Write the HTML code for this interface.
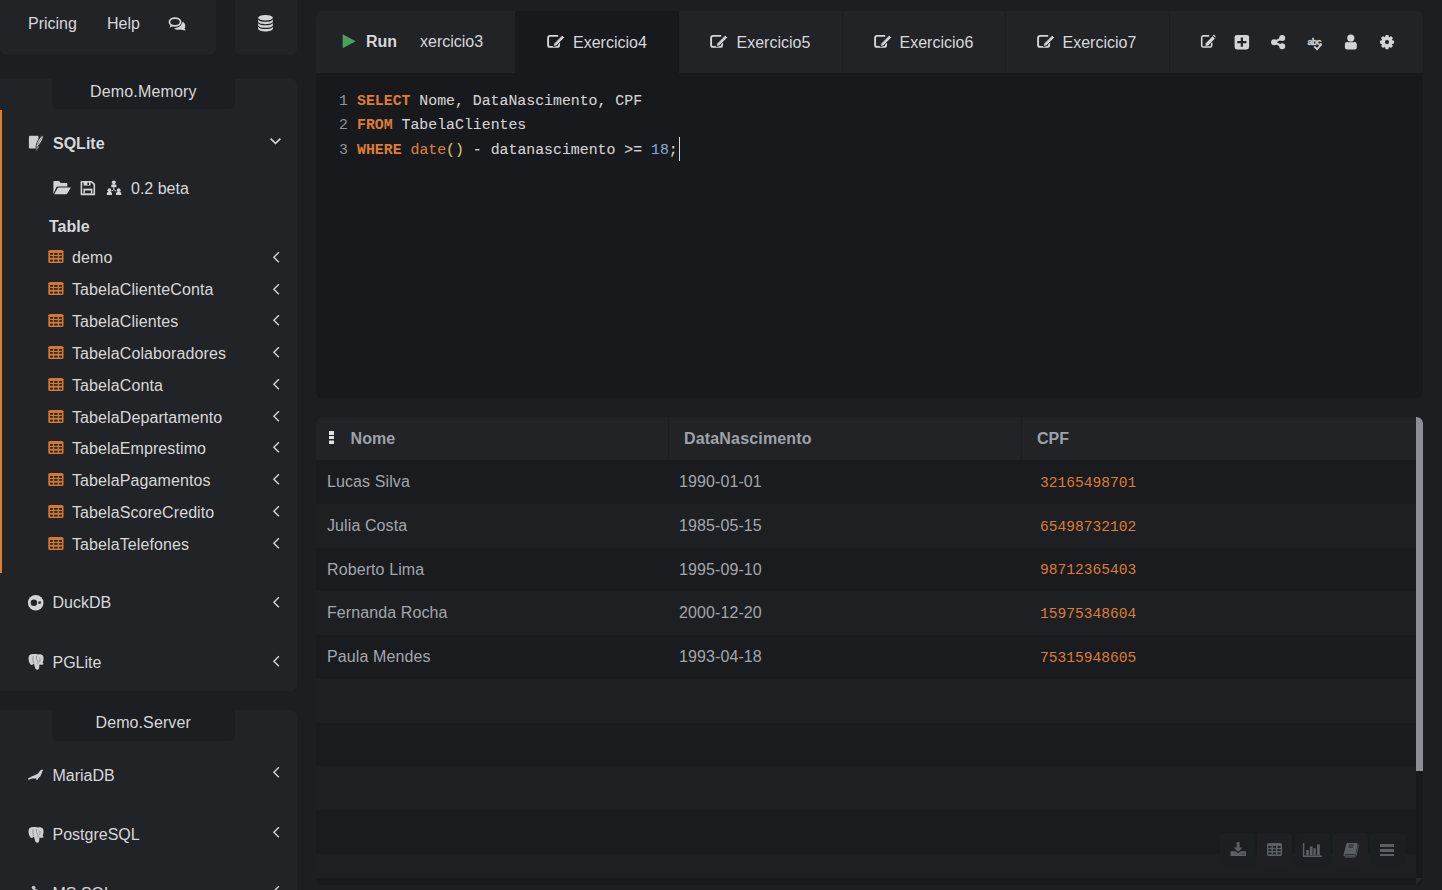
<!DOCTYPE html>
<html><head><meta charset="utf-8">
<style>
*{box-sizing:border-box;margin:0;padding:0}
html,body{width:1442px;height:890px;overflow:hidden;background:#1d1e22;font-family:"Liberation Sans",sans-serif;font-size:16px;color:#d6d8da}
.abs{position:absolute}
.panel{background:#222327}
.t{position:absolute;white-space:nowrap;line-height:16px;height:16px}
.b{font-weight:bold}
svg{position:absolute;display:block;overflow:visible}
.row{position:absolute;left:0;width:1100px;height:44px}
.code{position:absolute;font-family:"Liberation Mono",monospace;font-size:14.85px;line-height:24.45px;white-space:pre;color:#d4d4d4;-webkit-text-stroke:0.1px currentColor}
.kw{color:#dd7d35;font-weight:bold;-webkit-text-stroke:0}
.fn{color:#d6823f}
.pr{color:#dcc46a}
.nm{color:#7ea7d8}
.ln{position:absolute;font-family:"Liberation Mono",monospace;font-size:14.85px;line-height:24.45px;color:#8f949b;text-align:right;width:20px}
.cell{position:absolute;line-height:16px;white-space:nowrap;color:#a3a6ab;letter-spacing:0.1px}
.cpf{position:absolute;font-family:"Liberation Mono",monospace;font-size:14.6px;line-height:16px;color:#dc7c36;white-space:nowrap;margin-top:0.9px}
.chev{position:absolute;left:272px;width:8px;height:11px}
</style></head><body>
<!-- top left boxes -->
<div class="abs panel" style="left:0;top:0;width:216px;height:55px;border-radius:0 0 6px 6px"></div>
<div class="abs panel" style="left:235px;top:0;width:62px;height:55px;border-radius:0 0 6px 6px"></div>
<div class="t" style="left:28px;top:16px">Pricing</div>
<div class="t" style="left:107px;top:16px">Help</div>
<!-- ICON: comments -->

<!-- ICON: database -->


<!-- sidebar panel 1 -->
<div class="abs panel" style="left:0;top:79px;width:297px;height:612px;border-radius:0 6px 6px 0"></div>
<div class="abs" style="left:52px;top:79px;width:183px;height:30px;background:#1d1e22;border-radius:0 0 6px 6px"></div>
<div class="t" style="left:90px;top:83.5px;letter-spacing:0.16px">Demo.Memory</div>
<div class="abs" style="left:0;top:110px;width:2px;height:463px;background:#da8030"></div>

<div class="t b" style="left:53px;top:136.3px">SQLite</div>



<div class="t" style="left:131px;top:180.5px">0.2 beta</div>
<div class="t b" style="left:49px;top:219.2px">Table</div>


<div class="t" style="left:52.5px;top:595.2px">DuckDB</div>

<div class="t" style="left:52.5px;top:655.2px">PGLite</div>


<!-- sidebar panel 2 -->
<div class="abs panel" style="left:0;top:710px;width:297px;height:180px;border-radius:0 6px 0 0"></div>
<div class="abs" style="left:52px;top:710px;width:183px;height:31px;background:#1d1e22;border-radius:0 0 6px 6px"></div>
<div class="t" style="left:95.5px;top:714.5px;letter-spacing:0.1px">Demo.Server</div>
<div class="t" style="left:52.5px;top:768.3px">MariaDB</div>

<div class="t" style="left:52.5px;top:826.5px">PostgreSQL</div>

<div class="t" style="left:52.5px;top:885.5px">MS SQL</div>


<svg style="left:164px;top:12px;width:26px;height:22px" viewBox="0 0 26 22"><path d="M18.3 9.8 C21.5 10.8 21.9 14.5 20.6 16.6 L21.6 18.4 C19.2 18.2 17.6 17.9 16.4 17.4 C14.2 17.9 11.5 17.7 9.8 16.4 C13.5 16.2 17.8 14.2 18.3 9.8 Z" fill="#d2d5d7"/>
<ellipse cx="11" cy="10" rx="5.6" ry="3.9" fill="none" stroke="#d2d5d7" stroke-width="1.7"/>
<path d="M6.8 12.6 L5.6 15.6 L9.6 13.9 Z" fill="#d2d5d7"/></svg>
<svg style="left:256px;top:13px;width:20px;height:21px" viewBox="0 0 20 21"><ellipse cx="9.5" cy="4.8" rx="7.4" ry="2.8" fill="#d2d5d7"/>
<path d="M2.1 6.2 C2.1 9.6 16.9 9.6 16.9 6.2 L16.9 8.6 C16.9 12 2.1 12 2.1 8.6 Z" fill="#d2d5d7"/>
<path d="M2.1 9.8 C2.1 13.2 16.9 13.2 16.9 9.8 L16.9 12.2 C16.9 15.6 2.1 15.6 2.1 12.2 Z" fill="#d2d5d7"/>
<path d="M2.1 13.4 C2.1 16.8 16.9 16.8 16.9 13.4 L16.9 15.6 C16.9 19.6 2.1 19.6 2.1 15.6 Z" fill="#d2d5d7"/></svg>
<svg style="left:24px;top:130px;width:24px;height:24px" viewBox="0 0 24 24"><rect x="4.9" y="5.8" width="9.6" height="12.8" rx="1.1" fill="#ccd0d1"/>
<path d="M12.2 18.6 C11.6 15 13.4 10.2 17.6 5.8 C19.6 5.4 19.6 7.2 18.6 9.4 C17 12.8 14.6 15.6 12.2 18.6 Z" fill="#ccd0d1" stroke="#222327" stroke-width="0.9"/>
<path d="M13.4 15.4 C14.6 12.6 16 10.2 18 7.4" fill="none" stroke="#6e7274" stroke-width="0.7"/>
<path d="M12.6 18 L12.9 20.8" stroke="#8a8e90" stroke-width="0.8"/></svg>
<svg style="left:268px;top:136px;width:15px;height:10px" viewBox="0 0 15 10"><path d="M2.6 2.6 L7.5 7.4 L12.4 2.6" fill="none" stroke="#d2d5d7" stroke-width="1.6" stroke-linecap="butt"/></svg>
<svg style="left:50px;top:176px;width:24px;height:24px" viewBox="0 0 24 24"><path d="M3.4 18 L3.4 5.8 C3.4 5.2 3.8 4.9 4.3 4.9 L9.2 4.9 L10.6 7 L16.6 7 C17 7 17.3 7.3 17.3 7.7 L17.3 10.6 L8 10.6 C7.2 10.6 6.6 11 6.2 11.6 Z" fill="#d2d5d7"/>
<path d="M4.2 18.2 L7.4 12.4 C7.7 11.9 8.1 11.6 8.8 11.6 L20.9 11.6 L17.3 17.6 C17 18 16.6 18.2 16.1 18.2 Z" fill="#d2d5d7"/></svg>
<svg style="left:50px;top:176px;width:50px;height:24px" viewBox="0 0 50 24"><path d="M31.4 5.7 L41.6 5.7 L44.3 8.4 L44.3 18.4 L31.4 18.4 Z" fill="none" stroke="#d2d5d7" stroke-width="1.6" stroke-linejoin="round"/>
<path d="M33.6 6 L40.6 6 L40.6 9.6 L33.6 9.6 Z" fill="#d2d5d7"/>
<rect x="37.4" y="6.6" width="1.6" height="2.4" fill="#222327"/>
<path d="M33.4 12.6 L42.4 12.6 L42.4 17.6 L33.4 17.6 Z" fill="#d2d5d7"/>
<rect x="34.9" y="14.5" width="6" height="2.6" fill="#222327"/></svg>
<svg style="left:100px;top:176px;width:26px;height:24px" viewBox="0 0 26 24"><circle cx="13.8" cy="6.3" r="1.9" fill="#d2d5d7"/><path d="M11.200000000000001 11.2 L11.200000000000001 9.7 C11.200000000000001 8.5 12.200000000000001 8.2 13.8 8.2 C15.4 8.2 16.400000000000002 8.5 16.400000000000002 9.7 L16.400000000000002 11.2 Z" fill="#d2d5d7"/><circle cx="9.4" cy="14.2" r="1.9" fill="#d2d5d7"/><path d="M6.800000000000001 19.1 L6.800000000000001 17.599999999999998 C6.800000000000001 16.4 7.800000000000001 16.099999999999998 9.4 16.099999999999998 C11.0 16.099999999999998 12.0 16.4 12.0 17.599999999999998 L12.0 19.1 Z" fill="#d2d5d7"/><circle cx="18.7" cy="14.2" r="1.9" fill="#d2d5d7"/><path d="M16.099999999999998 19.1 L16.099999999999998 17.599999999999998 C16.099999999999998 16.4 17.099999999999998 16.099999999999998 18.7 16.099999999999998 C20.3 16.099999999999998 21.3 16.4 21.3 17.599999999999998 L21.3 19.1 Z" fill="#d2d5d7"/><path d="M13.8 11 L13.8 13.6 L11.6 15.2 M13.8 13.6 L16.2 15.2" stroke="#d2d5d7" stroke-width="0.9" fill="none"/></svg>
<div class="t" style="left:72px;top:250.00px;letter-spacing:0.1px">demo</div>
<svg style="left:48px;top:250.3px;width:16px;height:13px" viewBox="0 0 16 13"><rect x="0.3" y="0" width="15.2" height="13" rx="1.6" fill="#d4772f"/><g fill="#222327"><rect x="2.0" y="3.0" width="2.9" height="1.8"/><rect x="6.1" y="3.0" width="3.6" height="1.8"/><rect x="11.1" y="3.0" width="2.9" height="1.8"/><rect x="2.0" y="6.1" width="2.9" height="1.7"/><rect x="6.1" y="6.1" width="3.6" height="1.7"/><rect x="11.1" y="6.1" width="2.9" height="1.7"/><rect x="2.0" y="9.7" width="2.9" height="1.8"/><rect x="6.1" y="9.7" width="3.6" height="1.8"/><rect x="11.1" y="9.7" width="2.9" height="1.8"/></g></svg>
<div class="t" style="left:72px;top:282.05px;letter-spacing:0.1px">TabelaClienteConta</div>
<svg style="left:48px;top:282px;width:16px;height:13px" viewBox="0 0 16 13"><rect x="0.3" y="0" width="15.2" height="13" rx="1.6" fill="#d4772f"/><g fill="#222327"><rect x="2.0" y="3.0" width="2.9" height="1.8"/><rect x="6.1" y="3.0" width="3.6" height="1.8"/><rect x="11.1" y="3.0" width="2.9" height="1.8"/><rect x="2.0" y="6.1" width="2.9" height="1.7"/><rect x="6.1" y="6.1" width="3.6" height="1.7"/><rect x="11.1" y="6.1" width="2.9" height="1.7"/><rect x="2.0" y="9.7" width="2.9" height="1.8"/><rect x="6.1" y="9.7" width="3.6" height="1.8"/><rect x="11.1" y="9.7" width="2.9" height="1.8"/></g></svg>
<div class="t" style="left:72px;top:314.05px;letter-spacing:0.1px">TabelaClientes</div>
<svg style="left:48px;top:314px;width:16px;height:13px" viewBox="0 0 16 13"><rect x="0.3" y="0" width="15.2" height="13" rx="1.6" fill="#d4772f"/><g fill="#222327"><rect x="2.0" y="3.0" width="2.9" height="1.8"/><rect x="6.1" y="3.0" width="3.6" height="1.8"/><rect x="11.1" y="3.0" width="2.9" height="1.8"/><rect x="2.0" y="6.1" width="2.9" height="1.7"/><rect x="6.1" y="6.1" width="3.6" height="1.7"/><rect x="11.1" y="6.1" width="2.9" height="1.7"/><rect x="2.0" y="9.7" width="2.9" height="1.8"/><rect x="6.1" y="9.7" width="3.6" height="1.8"/><rect x="11.1" y="9.7" width="2.9" height="1.8"/></g></svg>
<div class="t" style="left:72px;top:346.05px;letter-spacing:0.1px">TabelaColaboradores</div>
<svg style="left:48px;top:346px;width:16px;height:13px" viewBox="0 0 16 13"><rect x="0.3" y="0" width="15.2" height="13" rx="1.6" fill="#d4772f"/><g fill="#222327"><rect x="2.0" y="3.0" width="2.9" height="1.8"/><rect x="6.1" y="3.0" width="3.6" height="1.8"/><rect x="11.1" y="3.0" width="2.9" height="1.8"/><rect x="2.0" y="6.1" width="2.9" height="1.7"/><rect x="6.1" y="6.1" width="3.6" height="1.7"/><rect x="11.1" y="6.1" width="2.9" height="1.7"/><rect x="2.0" y="9.7" width="2.9" height="1.8"/><rect x="6.1" y="9.7" width="3.6" height="1.8"/><rect x="11.1" y="9.7" width="2.9" height="1.8"/></g></svg>
<div class="t" style="left:72px;top:378.05px;letter-spacing:0.1px">TabelaConta</div>
<svg style="left:48px;top:378px;width:16px;height:13px" viewBox="0 0 16 13"><rect x="0.3" y="0" width="15.2" height="13" rx="1.6" fill="#d4772f"/><g fill="#222327"><rect x="2.0" y="3.0" width="2.9" height="1.8"/><rect x="6.1" y="3.0" width="3.6" height="1.8"/><rect x="11.1" y="3.0" width="2.9" height="1.8"/><rect x="2.0" y="6.1" width="2.9" height="1.7"/><rect x="6.1" y="6.1" width="3.6" height="1.7"/><rect x="11.1" y="6.1" width="2.9" height="1.7"/><rect x="2.0" y="9.7" width="2.9" height="1.8"/><rect x="6.1" y="9.7" width="3.6" height="1.8"/><rect x="11.1" y="9.7" width="2.9" height="1.8"/></g></svg>
<div class="t" style="left:72px;top:410.05px;letter-spacing:0.1px">TabelaDepartamento</div>
<svg style="left:48px;top:410px;width:16px;height:13px" viewBox="0 0 16 13"><rect x="0.3" y="0" width="15.2" height="13" rx="1.6" fill="#d4772f"/><g fill="#222327"><rect x="2.0" y="3.0" width="2.9" height="1.8"/><rect x="6.1" y="3.0" width="3.6" height="1.8"/><rect x="11.1" y="3.0" width="2.9" height="1.8"/><rect x="2.0" y="6.1" width="2.9" height="1.7"/><rect x="6.1" y="6.1" width="3.6" height="1.7"/><rect x="11.1" y="6.1" width="2.9" height="1.7"/><rect x="2.0" y="9.7" width="2.9" height="1.8"/><rect x="6.1" y="9.7" width="3.6" height="1.8"/><rect x="11.1" y="9.7" width="2.9" height="1.8"/></g></svg>
<div class="t" style="left:72px;top:441.05px;letter-spacing:0.1px">TabelaEmprestimo</div>
<svg style="left:48px;top:441px;width:16px;height:13px" viewBox="0 0 16 13"><rect x="0.3" y="0" width="15.2" height="13" rx="1.6" fill="#d4772f"/><g fill="#222327"><rect x="2.0" y="3.0" width="2.9" height="1.8"/><rect x="6.1" y="3.0" width="3.6" height="1.8"/><rect x="11.1" y="3.0" width="2.9" height="1.8"/><rect x="2.0" y="6.1" width="2.9" height="1.7"/><rect x="6.1" y="6.1" width="3.6" height="1.7"/><rect x="11.1" y="6.1" width="2.9" height="1.7"/><rect x="2.0" y="9.7" width="2.9" height="1.8"/><rect x="6.1" y="9.7" width="3.6" height="1.8"/><rect x="11.1" y="9.7" width="2.9" height="1.8"/></g></svg>
<div class="t" style="left:72px;top:473.05px;letter-spacing:0.1px">TabelaPagamentos</div>
<svg style="left:48px;top:473px;width:16px;height:13px" viewBox="0 0 16 13"><rect x="0.3" y="0" width="15.2" height="13" rx="1.6" fill="#d4772f"/><g fill="#222327"><rect x="2.0" y="3.0" width="2.9" height="1.8"/><rect x="6.1" y="3.0" width="3.6" height="1.8"/><rect x="11.1" y="3.0" width="2.9" height="1.8"/><rect x="2.0" y="6.1" width="2.9" height="1.7"/><rect x="6.1" y="6.1" width="3.6" height="1.7"/><rect x="11.1" y="6.1" width="2.9" height="1.7"/><rect x="2.0" y="9.7" width="2.9" height="1.8"/><rect x="6.1" y="9.7" width="3.6" height="1.8"/><rect x="11.1" y="9.7" width="2.9" height="1.8"/></g></svg>
<div class="t" style="left:72px;top:505.05px;letter-spacing:0.1px">TabelaScoreCredito</div>
<svg style="left:48px;top:505px;width:16px;height:13px" viewBox="0 0 16 13"><rect x="0.3" y="0" width="15.2" height="13" rx="1.6" fill="#d4772f"/><g fill="#222327"><rect x="2.0" y="3.0" width="2.9" height="1.8"/><rect x="6.1" y="3.0" width="3.6" height="1.8"/><rect x="11.1" y="3.0" width="2.9" height="1.8"/><rect x="2.0" y="6.1" width="2.9" height="1.7"/><rect x="6.1" y="6.1" width="3.6" height="1.7"/><rect x="11.1" y="6.1" width="2.9" height="1.7"/><rect x="2.0" y="9.7" width="2.9" height="1.8"/><rect x="6.1" y="9.7" width="3.6" height="1.8"/><rect x="11.1" y="9.7" width="2.9" height="1.8"/></g></svg>
<div class="t" style="left:72px;top:537.05px;letter-spacing:0.1px">TabelaTelefones</div>
<svg style="left:48px;top:537px;width:16px;height:13px" viewBox="0 0 16 13"><rect x="0.3" y="0" width="15.2" height="13" rx="1.6" fill="#d4772f"/><g fill="#222327"><rect x="2.0" y="3.0" width="2.9" height="1.8"/><rect x="6.1" y="3.0" width="3.6" height="1.8"/><rect x="11.1" y="3.0" width="2.9" height="1.8"/><rect x="2.0" y="6.1" width="2.9" height="1.7"/><rect x="6.1" y="6.1" width="3.6" height="1.7"/><rect x="11.1" y="6.1" width="2.9" height="1.7"/><rect x="2.0" y="9.7" width="2.9" height="1.8"/><rect x="6.1" y="9.7" width="3.6" height="1.8"/><rect x="11.1" y="9.7" width="2.9" height="1.8"/></g></svg>
<svg style="left:24px;top:590px;width:24px;height:24px" viewBox="0 0 24 24"><circle cx="11.7" cy="12.8" r="7.8" fill="#d2d5d7"/><circle cx="9.9" cy="12.7" r="3.2" fill="#222327"/><path d="M14.3 11.6 L17.2 11.6 L16.6 13.8 L14.3 13.8 Z" fill="#222327"/></svg>
<svg style="left:26.5px;top:652.5px;width:18px;height:18px" viewBox="0 0 18 18"><path d="M4.4 1.3 C2 1.6 1.2 4 1.6 6.8 C1.9 9 2.8 11.6 4.4 11.9 C5.6 12.1 6.4 11 6.9 10.4 C7.4 12 8 14.8 8.6 15.9 C9.2 17 11.2 17 11.8 15.9 C12.3 14.9 12.4 12.6 12.4 11.4 C13.6 11.8 15.2 11.9 16.4 11.2 C16.9 10.8 16.4 10.2 15.6 10 C16.4 8 17 5 16.2 3.2 C15.2 1.2 12.6 0.9 10.8 1.5 C9.2 0.9 6.6 0.9 4.4 1.3 Z" fill="#ccd0d1"/>
<path d="M6.2 3.2 C5.6 5 5.8 8 6.6 10 M9.6 2.8 C9.2 4.4 9.4 6.2 10.4 7.6 C11 8.6 11 10 10.6 11.4 M12.6 4.6 C13.2 5.6 13.2 7.6 12.6 9" fill="none" stroke="#6a6e71" stroke-width="0.6"/></svg>
<svg style="left:26.5px;top:825.5px;width:18px;height:18px" viewBox="0 0 18 18"><path d="M4.4 1.3 C2 1.6 1.2 4 1.6 6.8 C1.9 9 2.8 11.6 4.4 11.9 C5.6 12.1 6.4 11 6.9 10.4 C7.4 12 8 14.8 8.6 15.9 C9.2 17 11.2 17 11.8 15.9 C12.3 14.9 12.4 12.6 12.4 11.4 C13.6 11.8 15.2 11.9 16.4 11.2 C16.9 10.8 16.4 10.2 15.6 10 C16.4 8 17 5 16.2 3.2 C15.2 1.2 12.6 0.9 10.8 1.5 C9.2 0.9 6.6 0.9 4.4 1.3 Z" fill="#ccd0d1"/>
<path d="M6.2 3.2 C5.6 5 5.8 8 6.6 10 M9.6 2.8 C9.2 4.4 9.4 6.2 10.4 7.6 C11 8.6 11 10 10.6 11.4 M12.6 4.6 C13.2 5.6 13.2 7.6 12.6 9" fill="none" stroke="#6a6e71" stroke-width="0.6"/></svg>
<svg style="left:24px;top:764px;width:24px;height:20px" viewBox="0 0 24 20"><path d="M4 14.6 C5.4 13.8 6.2 13.2 7.6 12.5 C10 11.4 12.6 10.8 14 9.6 C15 8.4 15.6 6.8 16.8 6.2 C17.6 5.8 18.4 5.8 19.1 6 C18.6 7 17.9 8.6 17.2 10.6 C16.6 12.2 15.4 13.6 14.2 14.4 L13.2 15.9 L12 15.4 L12.4 14.6 C11 14.6 9.6 14.4 8.4 14.4 C7 14.6 6 15.4 5 15.8 C4.4 16 3.8 15.2 4 14.6 Z" fill="#ccd0d1"/></svg>
<svg style="left:24px;top:880px;width:24px;height:12px" viewBox="0 0 24 12"><circle cx="9.6" cy="7.6" r="1.9" fill="#bfc3c5"/><path d="M9 8.4 C11 8.6 13 9.6 15.4 10.2 L18 12 L10 12 Z" fill="#bfc3c5"/></svg>
<svg style="left:270px;top:250.80px;width:12px;height:12px" viewBox="0 0 12 12"><path d="M8.9 1.2 L3.9 6.2 L8.9 11.2" fill="none" stroke="#d2d5d7" stroke-width="1.4"/></svg>
<svg style="left:270px;top:282.56px;width:12px;height:12px" viewBox="0 0 12 12"><path d="M8.9 1.2 L3.9 6.2 L8.9 11.2" fill="none" stroke="#d2d5d7" stroke-width="1.4"/></svg>
<svg style="left:270px;top:314.32px;width:12px;height:12px" viewBox="0 0 12 12"><path d="M8.9 1.2 L3.9 6.2 L8.9 11.2" fill="none" stroke="#d2d5d7" stroke-width="1.4"/></svg>
<svg style="left:270px;top:346.08px;width:12px;height:12px" viewBox="0 0 12 12"><path d="M8.9 1.2 L3.9 6.2 L8.9 11.2" fill="none" stroke="#d2d5d7" stroke-width="1.4"/></svg>
<svg style="left:270px;top:377.84px;width:12px;height:12px" viewBox="0 0 12 12"><path d="M8.9 1.2 L3.9 6.2 L8.9 11.2" fill="none" stroke="#d2d5d7" stroke-width="1.4"/></svg>
<svg style="left:270px;top:409.60px;width:12px;height:12px" viewBox="0 0 12 12"><path d="M8.9 1.2 L3.9 6.2 L8.9 11.2" fill="none" stroke="#d2d5d7" stroke-width="1.4"/></svg>
<svg style="left:270px;top:441.36px;width:12px;height:12px" viewBox="0 0 12 12"><path d="M8.9 1.2 L3.9 6.2 L8.9 11.2" fill="none" stroke="#d2d5d7" stroke-width="1.4"/></svg>
<svg style="left:270px;top:473.12px;width:12px;height:12px" viewBox="0 0 12 12"><path d="M8.9 1.2 L3.9 6.2 L8.9 11.2" fill="none" stroke="#d2d5d7" stroke-width="1.4"/></svg>
<svg style="left:270px;top:504.88px;width:12px;height:12px" viewBox="0 0 12 12"><path d="M8.9 1.2 L3.9 6.2 L8.9 11.2" fill="none" stroke="#d2d5d7" stroke-width="1.4"/></svg>
<svg style="left:270px;top:536.64px;width:12px;height:12px" viewBox="0 0 12 12"><path d="M8.9 1.2 L3.9 6.2 L8.9 11.2" fill="none" stroke="#d2d5d7" stroke-width="1.4"/></svg>
<svg style="left:270px;top:595.50px;width:12px;height:12px" viewBox="0 0 12 12"><path d="M8.9 1.2 L3.9 6.2 L8.9 11.2" fill="none" stroke="#d2d5d7" stroke-width="1.4"/></svg>
<svg style="left:270px;top:654.50px;width:12px;height:12px" viewBox="0 0 12 12"><path d="M8.9 1.2 L3.9 6.2 L8.9 11.2" fill="none" stroke="#d2d5d7" stroke-width="1.4"/></svg>
<svg style="left:270px;top:765.50px;width:12px;height:12px" viewBox="0 0 12 12"><path d="M8.9 1.2 L3.9 6.2 L8.9 11.2" fill="none" stroke="#d2d5d7" stroke-width="1.4"/></svg>
<svg style="left:270px;top:826.40px;width:12px;height:12px" viewBox="0 0 12 12"><path d="M8.9 1.2 L3.9 6.2 L8.9 11.2" fill="none" stroke="#d2d5d7" stroke-width="1.4"/></svg>
<svg style="left:270px;top:885.40px;width:12px;height:12px" viewBox="0 0 12 12"><path d="M8.9 1.2 L3.9 6.2 L8.9 11.2" fill="none" stroke="#d2d5d7" stroke-width="1.4"/></svg>
<!-- tab bar -->
<div class="abs panel" style="left:316px;top:11px;width:1107px;height:62px;border-radius:6px 6px 0 0"></div>
<!-- editor -->
<div class="abs" style="left:316px;top:73px;width:1107px;height:325px;background:#18191d;border-radius:0 0 6px 6px"></div>
<div class="abs" style="left:515px;top:11px;width:164px;height:62px;background:#18191d"></div>
<div class="abs" style="left:842px;top:11px;width:1px;height:62px;background:#1c1d21"></div>
<div class="abs" style="left:1005px;top:11px;width:1px;height:62px;background:#1c1d21"></div>
<div class="abs" style="left:1169px;top:11px;width:1px;height:62px;background:#1c1d21"></div>

<div class="t b" style="left:366px;top:33.6px">Run</div>
<div class="t" style="left:420px;top:33.6px">xercicio3</div>
<div class="t" style="left:573px;top:35.4px">Exercicio4</div>
<div class="t" style="left:736.5px;top:35.4px">Exercicio5</div>
<div class="t" style="left:899.5px;top:35.4px">Exercicio6</div>
<div class="t" style="left:1062.5px;top:35.4px">Exercicio7</div>
<svg style="left:340px;top:32px;width:20px;height:20px" viewBox="0 0 20 20"><path d="M2.7 2.2 L15.7 9.25 L2.7 16.3 Z" fill="#46a458"/></svg>
<svg style="left:544px;top:30px;width:24px;height:22px" viewBox="0 0 24 22"><path d="M14.2 5.9 H6.1 Q4.1 5.9 4.1 7.9 V14.9 Q4.1 16.9 6.1 16.9 H13.1 Q15.1 16.9 15.1 14.9 V12.4" fill="none" stroke="#d2d5d7" stroke-width="1.9"/>
<path d="M9.4 16.6 L10 13.4 L18.2 5.2 L20.6 7.6 L12.4 15.8 Z" fill="#d2d5d7" stroke="#18191d" stroke-width="0.9" stroke-linejoin="round"/>
<path d="M11.4 13.8 L18.4 6.8" stroke="#9a9ea1" stroke-width="0.6" stroke-dasharray="0.8 0.8"/></svg>
<svg style="left:707px;top:30px;width:24px;height:22px" viewBox="0 0 24 22"><path d="M14.2 5.9 H6.1 Q4.1 5.9 4.1 7.9 V14.9 Q4.1 16.9 6.1 16.9 H13.1 Q15.1 16.9 15.1 14.9 V12.4" fill="none" stroke="#d2d5d7" stroke-width="1.9"/>
<path d="M9.4 16.6 L10 13.4 L18.2 5.2 L20.6 7.6 L12.4 15.8 Z" fill="#d2d5d7" stroke="#222327" stroke-width="0.9" stroke-linejoin="round"/>
<path d="M11.4 13.8 L18.4 6.8" stroke="#9a9ea1" stroke-width="0.6" stroke-dasharray="0.8 0.8"/></svg>
<svg style="left:870.5px;top:30px;width:24px;height:22px" viewBox="0 0 24 22"><path d="M14.2 5.9 H6.1 Q4.1 5.9 4.1 7.9 V14.9 Q4.1 16.9 6.1 16.9 H13.1 Q15.1 16.9 15.1 14.9 V12.4" fill="none" stroke="#d2d5d7" stroke-width="1.9"/>
<path d="M9.4 16.6 L10 13.4 L18.2 5.2 L20.6 7.6 L12.4 15.8 Z" fill="#d2d5d7" stroke="#222327" stroke-width="0.9" stroke-linejoin="round"/>
<path d="M11.4 13.8 L18.4 6.8" stroke="#9a9ea1" stroke-width="0.6" stroke-dasharray="0.8 0.8"/></svg>
<svg style="left:1034px;top:30px;width:24px;height:22px" viewBox="0 0 24 22"><path d="M14.2 5.9 H6.1 Q4.1 5.9 4.1 7.9 V14.9 Q4.1 16.9 6.1 16.9 H13.1 Q15.1 16.9 15.1 14.9 V12.4" fill="none" stroke="#d2d5d7" stroke-width="1.9"/>
<path d="M9.4 16.6 L10 13.4 L18.2 5.2 L20.6 7.6 L12.4 15.8 Z" fill="#d2d5d7" stroke="#222327" stroke-width="0.9" stroke-linejoin="round"/>
<path d="M11.4 13.8 L18.4 6.8" stroke="#9a9ea1" stroke-width="0.6" stroke-dasharray="0.8 0.8"/></svg>
<svg style="left:1198px;top:30px;width:20px;height:22px" viewBox="0 0 20 22"><path d="M11.2 5.9 H5.2 Q3.7 5.9 3.7 7.6 V15.6 Q3.7 17.0 5.2 17.0 H12.2 Q13.7 17.0 13.7 15.6 V12.8" fill="none" stroke="#d2d5d7" stroke-width="1.6"/>
<path d="M7.4 16 L7.9 13.2 L14.6 6.2 L16.9 8.5 L10.2 15.5 Z" fill="#d2d5d7"/>
<path d="M14.8 5.6 L15.9 4.6 L17.6 6.3 L17.4 7.5 Z" fill="#d2d5d7"/></svg>
<svg style="left:1232px;top:32px;width:20px;height:20px" viewBox="0 0 20 20"><rect x="2.6" y="2.9" width="14.5" height="14.5" rx="2.4" fill="#d2d5d7"/><path d="M9.85 5.6 V14.7 M5.3 10.15 H14.4" stroke="#222327" stroke-width="2.2"/></svg>
<svg style="left:1268px;top:32px;width:20px;height:20px" viewBox="0 0 20 20"><path d="M14.2 6.1 L6.1 10.2 L14.2 14.2" fill="none" stroke="#d2d5d7" stroke-width="2.2"/><circle cx="14.2" cy="6.1" r="3.0" fill="#d2d5d7"/><circle cx="6.1" cy="10.2" r="3.0" fill="#d2d5d7"/><circle cx="14.2" cy="14.2" r="3.0" fill="#d2d5d7"/></svg>
<svg style="left:1304px;top:32px;width:22px;height:20px" viewBox="0 0 22 20"><text x="3.4" y="12.8" font-family="Liberation Sans" font-size="9" font-weight="bold" fill="#d2d5d7" stroke="#d2d5d7" stroke-width="0.3" letter-spacing="-0.7">abc</text><path d="M10.2 14.4 L13 17.2 L17.6 12.2" fill="none" stroke="#d2d5d7" stroke-width="1.7"/></svg>
<svg style="left:1342px;top:32px;width:18px;height:20px" viewBox="0 0 18 20"><circle cx="8.8" cy="6.1" r="3.6" fill="#d2d5d7"/><rect x="2.9" y="10.0" width="11.9" height="7.5" rx="2.2" fill="#d2d5d7"/><path d="M6 10.1 H11.6" stroke="#55585c" stroke-width="0.5"/></svg>
<svg style="left:1376px;top:32px;width:22px;height:20px" viewBox="0 0 22 20"><polygon points="16.35,8.45 18.06,8.67 18.06,11.53 16.35,11.75 15.95,12.71 17.00,14.08 14.98,16.10 13.61,15.05 12.65,15.45 12.43,17.16 9.57,17.16 9.35,15.45 8.39,15.05 7.02,16.10 5.00,14.08 6.05,12.71 5.65,11.75 3.94,11.53 3.94,8.67 5.65,8.45 6.05,7.49 5.00,6.12 7.02,4.10 8.39,5.15 9.35,4.75 9.57,3.04 12.43,3.04 12.65,4.75 13.61,5.15 14.98,4.10 17.00,6.12 15.95,7.49" fill="#d2d5d7"/><circle cx="11" cy="10.1" r="5.6" fill="#d2d5d7"/><circle cx="11" cy="10.1" r="2.1" fill="#222327"/></svg>

<div class="ln" style="left:328px;top:89px">1<br>2<br>3</div>
<div class="code" style="left:357px;top:89px"><span class="kw">SELECT</span> Nome, DataNascimento, CPF
<span class="kw">FROM</span> TabelaClientes
<span class="kw">WHERE</span> <span class="fn">date</span><span class="pr">()</span> - datanascimento &gt;= <span class="nm">18</span>;</div>
<div class="abs" style="left:679px;top:137px;width:1px;height:24px;background:#d8d8d8"></div>

<!-- grid -->
<div class="abs" style="left:316px;top:417px;width:1107px;height:468px;background:#1a1b1f;border-radius:6px;overflow:hidden" id="grid">
<div class="abs" style="left:0;top:0;width:1100px;height:43px;background:#222327"></div>
<div class="abs" style="left:352px;top:0;width:1px;height:43px;background:#1c1d21"></div>
<div class="abs" style="left:705px;top:0;width:1px;height:43px;background:#1c1d21"></div>
<div class="abs" style="left:0;top:43.00px;width:1100px;height:43.75px;background:#1a1b1f"></div>
<div class="abs" style="left:0;top:86.75px;width:1100px;height:43.75px;background:#1e1f23"></div>
<div class="abs" style="left:0;top:130.50px;width:1100px;height:43.75px;background:#1a1b1f"></div>
<div class="abs" style="left:0;top:174.25px;width:1100px;height:43.75px;background:#1e1f23"></div>
<div class="abs" style="left:0;top:218.00px;width:1100px;height:43.75px;background:#1a1b1f"></div>
<div class="abs" style="left:0;top:261.75px;width:1100px;height:43.75px;background:#1e1f23"></div>
<div class="abs" style="left:0;top:305.50px;width:1100px;height:43.75px;background:#1a1b1f"></div>
<div class="abs" style="left:0;top:349.25px;width:1100px;height:43.75px;background:#1e1f23"></div>
<div class="abs" style="left:0;top:393.00px;width:1100px;height:43.75px;background:#1a1b1f"></div>
<div class="abs" style="left:0;top:436.75px;width:1100px;height:43.75px;background:#1e1f23"></div>
<div class="abs" style="left:0;top:461px;width:1100px;height:7px;background:#18191c"></div>
<div class="t b" style="left:34.6px;top:14px;color:#9ea2a8">Nome</div>
<div class="t b" style="left:368px;top:14px;color:#9ea2a8;letter-spacing:0.17px">DataNascimento</div>
<div class="t b" style="left:721px;top:14px;color:#9ea2a8">CPF</div>
<div class="abs" style="left:13px;top:14px;width:4.6px;height:4px;background:#dfe1e3"></div>
<div class="abs" style="left:13px;top:19.2px;width:4.6px;height:3.3px;background:#dfe1e3"></div>
<div class="abs" style="left:13px;top:22.5px;width:4.6px;height:1.4px;background:#7d8084"></div>
<div class="abs" style="left:13px;top:23.9px;width:4.6px;height:3.3px;background:#dfe1e3"></div>
<div class="cell" style="left:11px;top:57.00px">Lucas Silva</div>
<div class="cell" style="left:363px;top:57.00px">1990-01-01</div>
<div class="cpf" style="left:724px;top:57.00px">32165498701</div>
<div class="cell" style="left:11px;top:100.75px">Julia Costa</div>
<div class="cell" style="left:363px;top:100.75px">1985-05-15</div>
<div class="cpf" style="left:724px;top:100.75px">65498732102</div>
<div class="cell" style="left:11px;top:144.50px">Roberto Lima</div>
<div class="cell" style="left:363px;top:144.50px">1995-09-10</div>
<div class="cpf" style="left:724px;top:144.50px">98712365403</div>
<div class="cell" style="left:11px;top:188.25px">Fernanda Rocha</div>
<div class="cell" style="left:363px;top:188.25px">2000-12-20</div>
<div class="cpf" style="left:724px;top:188.25px">15975348604</div>
<div class="cell" style="left:11px;top:232.00px">Paula Mendes</div>
<div class="cell" style="left:363px;top:232.00px">1993-04-18</div>
<div class="cpf" style="left:724px;top:232.00px">75315948605</div>
<div class="abs" style="left:904px;top:416.29999999999995px;width:35px;height:33px;background:#1d1e22;border-radius:4px"></div>
<div class="abs" style="left:941px;top:416.29999999999995px;width:35px;height:33px;background:#201f23;border-radius:4px"></div>
<div class="abs" style="left:979px;top:416.29999999999995px;width:35px;height:33px;background:#1d1e22;border-radius:4px"></div>
<div class="abs" style="left:1017px;top:416.29999999999995px;width:35px;height:33px;background:#201f23;border-radius:4px"></div>
<div class="abs" style="left:1054px;top:416.29999999999995px;width:35px;height:33px;background:#1d1e22;border-radius:4px"></div>
<svg style="left:912px;top:423px;width:20px;height:18px" viewBox="0 0 20 18"><path d="M8.6 2 H11.6 V7.4 H14.6 L10.1 12 L5.6 7.4 H8.6 Z" fill="#5b5e63"/><path d="M2.6 11.2 H7.6 L10.1 13.6 L12.6 11.2 H18 V15.9 H2.6 Z" fill="#5b5e63"/><rect x="13.4" y="13.6" width="1" height="0.9" fill="#1a1b1f"/><rect x="15.2" y="13.6" width="1.4" height="0.9" fill="#1a1b1f"/></svg>
<svg style="left:949px;top:424px;width:20px;height:17px" viewBox="0 0 20 17"><rect x="2" y="2" width="15" height="12.9" rx="1.5" fill="#5b5e63"/><g fill="#201f23"><rect x="3.3" y="5.0" width="3.1" height="1.8"/><rect x="7.9" y="5.0" width="3.1" height="1.8"/><rect x="12.5" y="5.0" width="3.1" height="1.8"/><rect x="3.3" y="8.2" width="3.1" height="1.8"/><rect x="7.9" y="8.2" width="3.1" height="1.8"/><rect x="12.5" y="8.2" width="3.1" height="1.8"/><rect x="3.3" y="11.5" width="3.1" height="1.8"/><rect x="7.9" y="11.5" width="3.1" height="1.8"/><rect x="12.5" y="11.5" width="3.1" height="1.8"/></g></svg>
<svg style="left:984px;top:424px;width:24px;height:18px" viewBox="0 0 24 18"><path d="M3.6 2 V15.3 H22" fill="none" stroke="#5b5e63" stroke-width="1.5"/><rect x="6.2" y="9" width="2.6" height="5.4" fill="#5b5e63"/><rect x="9.8" y="5.4" width="2.8" height="9" fill="#5b5e63"/><rect x="13.4" y="7.2" width="2.4" height="7.2" fill="#5b5e63"/><rect x="17" y="3.4" width="2.8" height="11" fill="#5b5e63"/></svg>
<svg style="left:1024px;top:423px;width:22px;height:20px" viewBox="0 0 22 20"><path d="M6.4 3.8 C6.6 3.2 7 2.9 7.6 2.9 H16.6 C17.4 2.9 17.8 3.6 17.6 4.4 L15.4 15 C15.2 15.9 14.6 16.4 13.8 16.4 H5.2 C3.8 16.4 3.2 15.4 3.6 14.2 Z" fill="#5b5e63"/><path d="M18.4 5 L16.2 15.6 C16 16.6 15.2 17.1 14.2 17.1 H5.2" fill="none" stroke="#5b5e63" stroke-width="0.9"/><rect x="8.8" y="4.6" width="5" height="0.9" fill="#201f23"/><rect x="8.4" y="6.7" width="5" height="0.9" fill="#201f23"/><rect x="4.8" y="14.3" width="9.8" height="0.9" fill="#201f23"/></svg>
<div class="abs" style="left:1063.6px;top:427.20000000000005px;width:14.5px;height:2.8px;background:#5b5e63"></div>
<div class="abs" style="left:1063.6px;top:432px;width:14.5px;height:2.8px;background:#5b5e63"></div>
<div class="abs" style="left:1063.6px;top:436.6px;width:14.5px;height:2.8px;background:#5b5e63"></div>
<div class="abs" style="left:1100px;top:0;width:7px;height:354px;background:#8b9097;border-radius:0 6px 0 0"></div>
<div class="abs" style="left:1100px;top:354px;width:7px;height:107px;background:#18191c"></div>
<svg style="left:1100px;top:461px;width:7px;height:7px" viewBox="0 0 7 7"><path d="M0 0 H7 L0 7 Z" fill="#25262a"/></svg>
</div>
</body></html>
